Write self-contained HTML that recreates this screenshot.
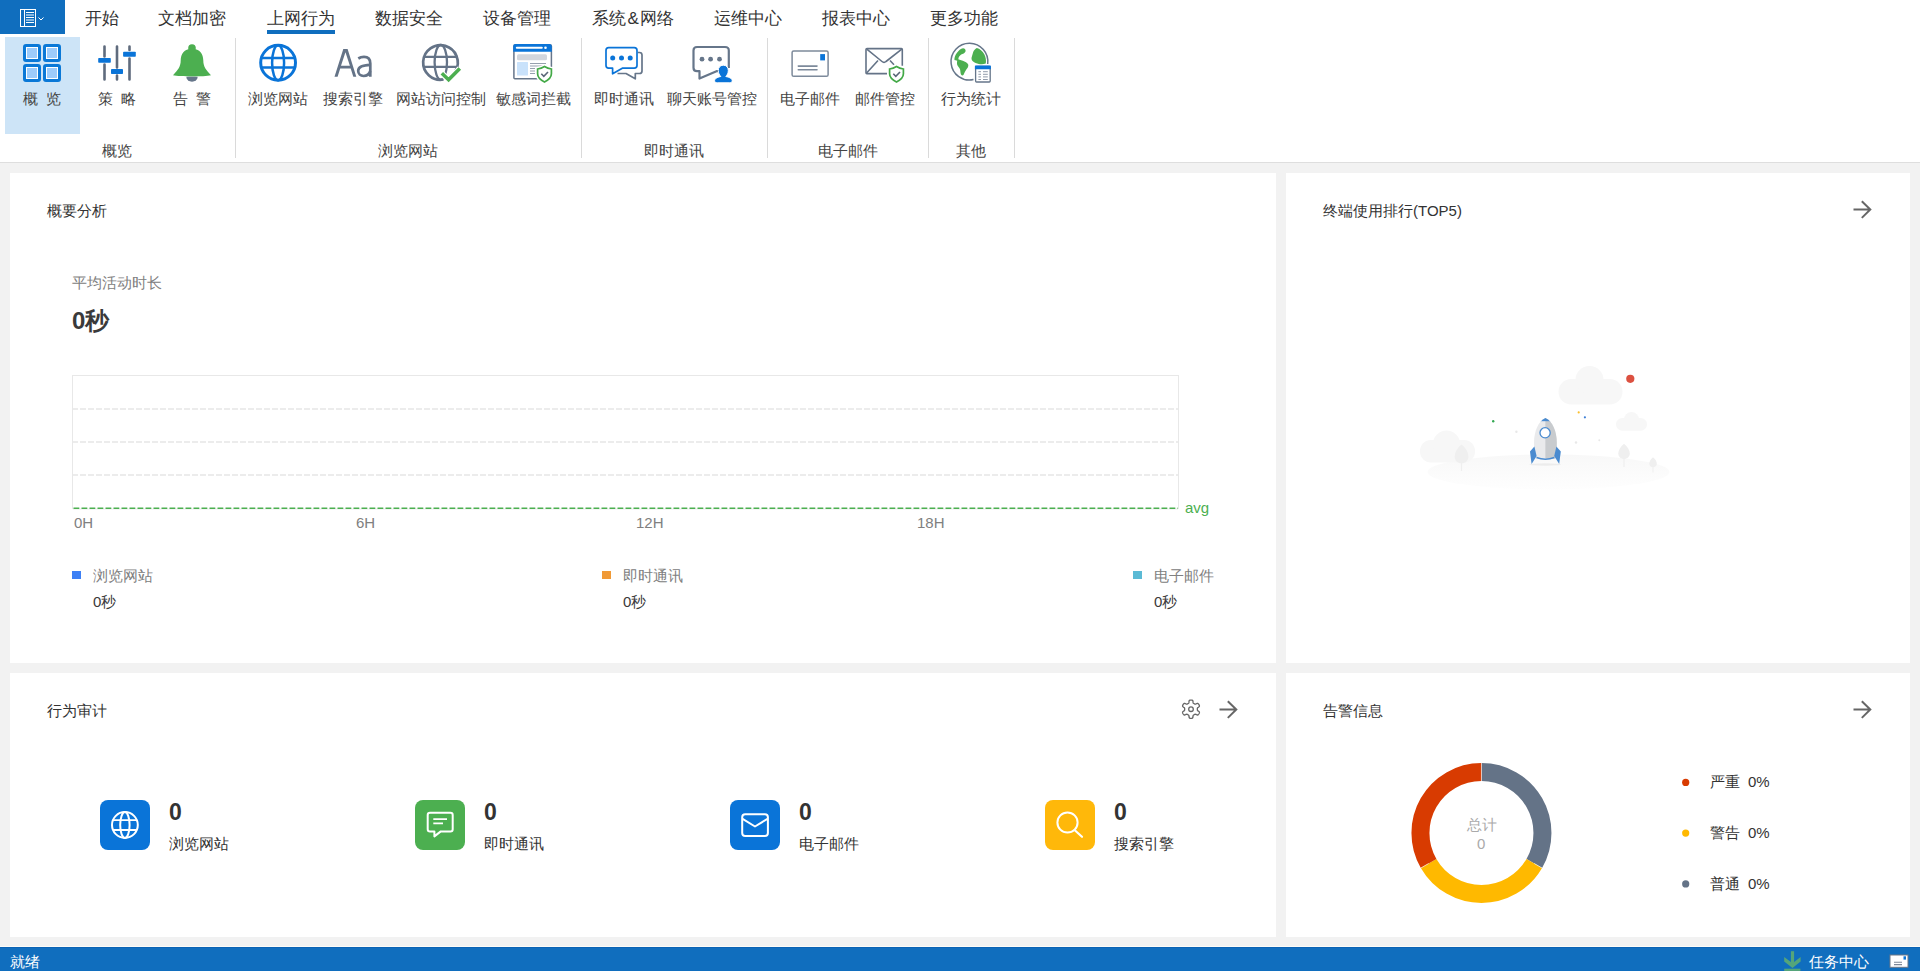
<!DOCTYPE html>
<html><head><meta charset="utf-8">
<style>
*{margin:0;padding:0;box-sizing:border-box}
html,body{width:1920px;height:971px;overflow:hidden;background:#fff}
body{font-family:"Liberation Sans",sans-serif;color:#333;position:relative}
.a{position:absolute;white-space:nowrap}
.t17{font-size:17px;line-height:20px;color:#333}
.t15{font-size:15px;line-height:20px}
.tab{top:9px}
.rb{top:88.5px;color:#444;text-align:center;width:120px}
.gl{top:141px;color:#444;text-align:center;width:120px}
.sep{position:absolute;top:38px;width:1px;height:120px;background:#dadada}
.panel{position:absolute;background:#fff}
svg{position:absolute;overflow:visible}
</style></head><body>
<!-- tab bar -->
<div class="a" style="left:0;top:0;width:65px;height:34px;background:#106ebe"></div>
<svg style="left:0;top:0" width="65" height="34">
  <rect x="20.5" y="9.5" width="15" height="17" fill="none" stroke="#fff" stroke-width="1"/>
  <line x1="24.5" y1="9.5" x2="24.5" y2="26.5" stroke="#fff" stroke-width="1"/>
  <path d="M26 12.5h8M26 15h8M26 17.5h8M26 20h8M26 22.5h8" stroke="#fff" stroke-width="1"/>
  <path d="M38.5 17.5l2.5 2.5 2.5-2.5" fill="none" stroke="#fff" stroke-width="1"/>
</svg>
<div class="a t17 tab" style="left:85px">开始</div>
<div class="a t17 tab" style="left:158px">文档加密</div>
<div class="a t17 tab" style="left:267px">上网行为</div>
<div class="a t17 tab" style="left:375px">数据安全</div>
<div class="a t17 tab" style="left:483px">设备管理</div>
<div class="a t17 tab" style="left:592px">系统<span style="margin:0 1.5px">&amp;</span>网络</div>
<div class="a t17 tab" style="left:714px">运维中心</div>
<div class="a t17 tab" style="left:822px">报表中心</div>
<div class="a t17 tab" style="left:930px">更多功能</div>
<div class="a" style="left:267px;top:30px;width:68px;height:3.6px;background:#106ebe"></div>

<!-- ribbon -->
<div class="a" style="left:5px;top:37px;width:75px;height:97px;background:#cde4f7"></div>
<div class="a" style="left:0;top:162px;width:1920px;height:1px;background:#dedede"></div>
<div class="a" style="left:0;top:163px;width:1920px;height:784px;background:#f2f2f2"></div>

<div class="sep" style="left:235px"></div>
<div class="sep" style="left:581px"></div>
<div class="sep" style="left:767px"></div>
<div class="sep" style="left:928px"></div>
<div class="sep" style="left:1014px"></div>

<div class="a t15 rb" style="left:-18px;word-spacing:4px">概 览</div>
<div class="a t15 rb" style="left:57px;word-spacing:4px">策 略</div>
<div class="a t15 rb" style="left:132px;word-spacing:4px">告 警</div>
<div class="a t15 rb" style="left:218px">浏览网站</div>
<div class="a t15 rb" style="left:293px">搜索引擎</div>
<div class="a t15 rb" style="left:381px">网站访问控制</div>
<div class="a t15 rb" style="left:473px">敏感词拦截</div>
<div class="a t15 rb" style="left:564px">即时通讯</div>
<div class="a t15 rb" style="left:652px">聊天账号管控</div>
<div class="a t15 rb" style="left:750px">电子邮件</div>
<div class="a t15 rb" style="left:825px">邮件管控</div>
<div class="a t15 rb" style="left:911px">行为统计</div>

<div class="a t15 gl" style="left:57px">概览</div>
<div class="a t15 gl" style="left:348px">浏览网站</div>
<div class="a t15 gl" style="left:614px">即时通讯</div>
<div class="a t15 gl" style="left:788px">电子邮件</div>
<div class="a t15 gl" style="left:911px">其他</div>

<svg style="left:0;top:0" width="1100" height="170" viewBox="0 0 1100 170">
<!-- overview -->
<g>
 <rect x="24.5" y="45.5" width="15" height="15" rx="1.5" fill="#fff" stroke="#0a78d7" stroke-width="3"/>
 <rect x="44.5" y="45.5" width="15" height="15" rx="1.5" fill="#fff" stroke="#0a78d7" stroke-width="3"/>
 <rect x="24.5" y="65.5" width="15" height="15" rx="1.5" fill="#fff" stroke="#0a78d7" stroke-width="3"/>
 <rect x="44.5" y="65.5" width="15" height="15" rx="1.5" fill="#fff" stroke="#0a78d7" stroke-width="3"/>
 <rect x="27" y="48" width="10" height="10" fill="#9ccbfb"/>
 <rect x="47" y="48" width="10" height="10" fill="#9ccbfb"/>
 <rect x="27" y="68" width="10" height="10" fill="#9ccbfb"/>
 <rect x="47" y="68" width="10" height="10" fill="#9ccbfb"/>
</g>
<!-- policy -->
<g stroke="#5f6b7d" stroke-width="2.6" stroke-linecap="round">
 <path d="M104.5 46.5V56.5M104.5 64.5V79.5"/>
 <path d="M117 46.5V67.5M117 75.5V79.5"/>
 <path d="M129.5 46.5V50M129.5 58.5V79.5"/>
</g>
<g fill="#0a74d8">
 <rect x="98.2" y="58" width="12.6" height="4.8" rx="0.8"/>
 <rect x="111" y="69.1" width="12" height="4.9" rx="0.8"/>
 <rect x="123.1" y="51.8" width="12.7" height="4.9" rx="0.8"/>
</g>
<!-- bell -->
<g>
 <circle cx="192" cy="48" r="3.8" fill="#4caf50"/>
 <path d="M192 48.8C184 48.8 180.7 54.5 180.7 60.5C180.7 66.5 178 70 173 75.2C180 76.8 204 76.8 211 75.2C206 70 203.3 66.5 203.3 60.5C203.3 54.5 200 48.8 192 48.8Z" fill="#4caf50"/>
 <path d="M186.3 76.8A5.7 5 0 0 0 197.7 76.8Z" fill="#66768a"/>
</g>
<!-- globe blue -->
<g fill="none" stroke="#0a74d8">
 <circle cx="278.1" cy="62.75" r="17.4" stroke-width="3"/>
 <ellipse cx="278.1" cy="62.75" rx="6" ry="17.4" stroke-width="2.5"/>
 <path d="M261.5 58H294.7M261.5 67.6H294.7" stroke-width="2.5"/>
</g>
<!-- Aa -->
<g fill="none" stroke="#647387" stroke-width="2.7">
 <path d="M334.5 76.8L343.3 49H347.6L356.3 76.8H353.3L350.7 68.5H340.2L337.6 76.8ZM341 65.8H349.9L345.45 52.2Z" fill="#647387" stroke="none" fill-rule="evenodd"/>
 <path d="M358.3 58.5C360 57.4 362 56.9 364 56.9C368.5 56.9 370.3 59.3 370.3 63.5V76.8"/>
 <path d="M370.3 64.8C364.5 65 358.2 65.8 358.2 70.8C358.2 74 360.6 76 363.5 76C367 76 369.5 73.5 370.3 71"/>
</g>
<!-- globe check -->
<g fill="none" stroke="#647387">
 <path d="M455.5 71A17.3 17.3 0 1 0 443.5 79.5" stroke-width="2.7"/>
 <ellipse cx="440.8" cy="62.3" rx="6.2" ry="17.3" stroke-width="2.3"/>
 <path d="M424 56.8H457.5M424 66.8H456" stroke-width="2.3"/>
</g>
<path d="M441.8 73.3L448.6 79.8L459.8 68.5" fill="none" stroke="#fff" stroke-width="6"/>
<path d="M441.8 73.3L448.6 79.8L459.8 68.5" fill="none" stroke="#4caf50" stroke-width="3.6"/>
<!-- sensitive words -->
<g>
 <rect x="513.9" y="44.9" width="37.5" height="33.8" rx="1" fill="#fff" stroke="#66768a" stroke-width="1.5"/>
 <path d="M513.2 46.5Q513.2 44.1 515.5 44.1H549.5Q551.8 44.1 551.8 46.5V51.8H513.2Z" fill="#0a74d8"/>
 <rect x="515.8" y="46.7" width="27" height="2" rx="1" fill="#fff"/>
 <circle cx="545.5" cy="47.8" r="1.3" fill="#fff"/>
 <rect x="517" y="54.3" width="30" height="6" rx="1.5" fill="#d2d6dd"/>
 <rect x="517" y="62" width="11" height="13.5" rx="0.5" fill="#c9e2fb"/>
 <path d="M530 63.5H546M530 66H543M530 68.5H535M530 71H535M530 73.5H535" stroke="#8a95a5" stroke-width="0.9"/>
 <path d="M544.5 65.5C541.5 67.5 539 67.8 536.5 68.2V73.5C536.5 78 540 81 544.5 83C549 81 552.5 78 552.5 73.5V68.2C550 67.8 547.5 67.5 544.5 65.5Z" fill="#fff" stroke="#fff" stroke-width="2.5"/>
 <path d="M544.5 66.5C542 68 539.5 68.7 537.6 69V73.8C537.6 77.5 540.5 80 544.5 82C548.5 80 551.4 77.5 551.4 73.8V69C549.5 68.7 547 68 544.5 66.5Z" fill="#fff" stroke="#43a947" stroke-width="1.7"/>
 <path d="M541.3 73.8L543.8 76.3L548 72" fill="none" stroke="#5a6678" stroke-width="1.6"/>
</g>
<!-- IM -->
<g fill="none" stroke-linejoin="round">
 <path d="M637.6 52.5H639.5Q642 52.5 642 55V71Q642 73.5 639.5 73.5H635.3V78.8L626 73.5H617.5" stroke="#66768a" stroke-width="1.7"/>
 <path d="M608.6 47.7H634.3Q637 47.7 637 50.4V65.6Q637 68.2 634.3 68.2H622.3L612.6 73.8V68.2H608.6Q606 68.2 606 65.6V50.4Q606 47.7 608.6 47.7Z" fill="#fff" stroke="#0a74d8" stroke-width="1.7"/>
</g>
<g fill="#0a74d8"><circle cx="612.7" cy="57.9" r="2.5"/><circle cx="621.5" cy="57.9" r="2.5"/><circle cx="630.2" cy="57.9" r="2.5"/></g>
<!-- chat account -->
<g fill="none" stroke="#66768a" stroke-width="2.2" stroke-linejoin="round">
 <path d="M723 71.2H716.5L699.5 78.5V71.2H697Q693.5 71.2 693.5 67.7V50.5Q693.5 47 697 47H725Q728.8 47 728.8 50.5V68"/>
</g>
<g fill="#66768a"><circle cx="702" cy="59.2" r="2.4"/><circle cx="710.6" cy="59.2" r="2.4"/><circle cx="719.5" cy="59.2" r="2.4"/></g>
<path d="M723.3 65.2C719.8 65.2 718.3 67.8 718.3 70.5C718.3 73 719.3 75 720.8 76.5C717 77.3 714.6 78.8 714.6 80.6C714.6 82.2 715.8 82.8 717.5 82.8H729.3C731 82.8 732.2 82.2 732.2 80.6C732.2 78.8 729.8 77.3 725.8 76.5C727.3 75 728.3 73 728.3 70.5C728.3 67.8 726.8 65.2 723.3 65.2Z" fill="#0a74d8" stroke="#fff" stroke-width="1"/>
<!-- email -->
<g>
 <rect x="792.1" y="50.9" width="36" height="25.4" rx="1.6" fill="none" stroke="#7d8a9b" stroke-width="1.5"/>
 <rect x="820.2" y="54.1" width="4.8" height="6.3" fill="#0a74d8"/>
 <path d="M798.3 66.1H817M798.3 69.8H817" stroke="#7d8a9b" stroke-width="1.6" stroke-linecap="round"/>
</g>
<!-- mail control -->
<g fill="none" stroke="#647387" stroke-width="1.6" stroke-linejoin="round">
 <path d="M887 73.6H866.8Q866 73.6 866 72.8V49.6Q866 48.6 867 48.6H901.5Q902.3 48.6 902.3 49.6V65.8"/>
 <path d="M866.8 49.2L882 61.5Q884 63.2 886 61.5L901.8 49.2"/>
 <path d="M866.6 73L878 60.5M890 60.5L894 64.7"/>
</g>
<path d="M896.5 65.5C893.5 67.5 891 67.8 888.5 68.2V73.5C888.5 78 892 81 896.5 83C901 81 904.5 78 904.5 73.5V68.2C902 67.8 899.5 67.5 896.5 65.5Z" fill="#fff" stroke="#fff" stroke-width="2.5"/>
<path d="M896.5 66.5C894 68 891.5 68.7 889.6 69V73.8C889.6 77.5 892.5 80 896.5 82C900.5 80 903.4 77.5 903.4 73.8V69C901.5 68.7 899 68 896.5 66.5Z" fill="#fff" stroke="#43a947" stroke-width="1.7"/>
<path d="M893.3 73.8L895.8 76.3L900 72" fill="none" stroke="#5a6678" stroke-width="1.6"/>
<!-- stats -->
<g>
 <path d="M987.7 64A18.4 18.4 0 1 0 973.5 79.6" fill="none" stroke="#66768a" stroke-width="1.5"/>
 <path d="M963 48.3C964.8 48.3 966 49.8 965.5 51.5C965 53 962.8 54 961.2 54.6C959.5 55.6 958.5 57.5 958.3 59.3C959.5 59.8 961 60.2 962.8 60.8C965 61.6 967.3 62.7 968.3 64.7C968.6 66.5 967.3 68.3 966.3 69.6C965.3 71.3 964.3 73 963.6 74.8C963 75.8 961.6 75.6 961 74.6C960.3 72.8 960.5 70.8 960 69.2C959.3 67.6 957.8 66.6 957.3 65C956.8 63.6 957 62.2 957.2 60.8C956.2 60.5 955 60.6 954.4 59.8C954.3 57.3 955.5 54.8 957 52.8C958.6 50.5 960.7 48.8 963 48.3Z" fill="#4caf50"/>
 <path d="M976.8 47.9C979.8 48.6 982.5 51 984.3 54.3C985.8 57.2 986.3 60.3 985.8 63.5C983.6 64.3 981 64.3 978.8 63.9C976.6 63.4 974.5 62.6 972.8 61.2C971.4 60 971.2 58 971.9 56.4C972.5 55 972.6 53.5 973.2 52C973.9 50.2 975.2 48.6 976.8 47.9Z" fill="#4caf50"/>
 <rect x="975.6" y="66.3" width="14.6" height="15.7" rx="0.9" fill="#fff" stroke="#66768a" stroke-width="1.3"/>
 <rect x="974.9" y="65.6" width="16" height="3.6" rx="0.5" fill="#0a74d8"/>
 <path d="M978.4 71.7H981M983 71.7H987.8M978.4 74.3H981M983 74.3H987.8M978.4 76.9H981M983 76.9H987.8M978.4 79.5H981M983 79.5H987.8" stroke="#8590a0" stroke-width="0.9"/>
</g>
</svg>


<!-- panels -->
<div class="panel" style="left:10px;top:173px;width:1266px;height:490px"></div>
<div class="panel" style="left:1286px;top:173px;width:624px;height:490px"></div>
<div class="panel" style="left:10px;top:673px;width:1266px;height:264px"></div>
<div class="panel" style="left:1286px;top:673px;width:624px;height:264px"></div>

<div class="a t15" style="left:47px;top:201px;color:#333">概要分析</div>
<div class="a t15" style="left:72px;top:273px;color:#808080">平均活动时长</div>
<div class="a" style="left:72px;top:306px;font-size:24px;line-height:30px;font-weight:bold;color:#3a3a3a">0秒</div>
<div class="a" style="left:72px;top:375px;width:1107px;height:134px;border:1px solid #e8e8e8;border-bottom:none"></div>
<svg style="left:0;top:0" width="1280" height="540">
 <path d="M73 409H1178M73 442H1178M73 475H1178" stroke="#ececec" stroke-width="2" stroke-dasharray="6 2" stroke-dashoffset="1"/>
 <path d="M73 509H1178" stroke="#ececec" stroke-width="1"/>
 <path d="M73.5 508.2H1178" stroke="#4caf50" stroke-width="1.4" stroke-dasharray="5.8 2.2"/>
</svg>
<div class="a t15" style="left:1185px;top:498px;color:#4caf50">avg</div>
<div class="a t15" style="left:74px;top:513px;color:#808080">0H</div>
<div class="a t15" style="left:356px;top:513px;color:#808080">6H</div>
<div class="a t15" style="left:636px;top:513px;color:#808080">12H</div>
<div class="a t15" style="left:917px;top:513px;color:#808080">18H</div>
<div class="a" style="left:72px;top:571px;width:9px;height:8px;background:#3d80f5"></div>
<div class="a" style="left:602px;top:571px;width:9px;height:8px;background:#f09a37"></div>
<div class="a" style="left:1133px;top:571px;width:9px;height:8px;background:#5bbad5"></div>
<div class="a t15" style="left:93px;top:566px;color:#808080">浏览网站</div>
<div class="a t15" style="left:623px;top:566px;color:#808080">即时通讯</div>
<div class="a t15" style="left:1154px;top:566px;color:#808080">电子邮件</div>
<div class="a t15" style="left:93px;top:592px;color:#3a3a3a">0秒</div>
<div class="a t15" style="left:623px;top:592px;color:#3a3a3a">0秒</div>
<div class="a t15" style="left:1154px;top:592px;color:#3a3a3a">0秒</div>

<!-- panel2 -->
<div class="a t15" style="left:1323px;top:201px;color:#333">终端使用排行(TOP5)</div>
<svg style="left:0;top:0" width="1920" height="971">
 <defs><path id="arr" d="M1219.5 709.5H1236M1227.8 701.3L1236.3 709.5L1227.8 717.9" fill="none" stroke="#666" stroke-width="2" stroke-linecap="butt"/></defs>
 <use href="#arr" transform="translate(634 -500)"/>
 <use href="#arr"/>
 <use href="#arr" transform="translate(634 0)"/>
 <path d="M1191.00 700.05L1191.24 700.05L1191.48 700.07L1191.72 700.09L1191.95 700.13L1192.19 700.19L1192.41 700.28L1192.62 700.45L1192.80 700.72L1192.93 701.15L1193.01 701.71L1193.05 702.28L1193.11 702.70L1193.20 702.98L1193.32 703.16L1193.45 703.28L1193.59 703.37L1193.74 703.46L1193.89 703.54L1194.03 703.62L1194.17 703.70L1194.32 703.78L1194.46 703.87L1194.60 703.96L1194.75 704.04L1194.90 704.11L1195.07 704.17L1195.28 704.18L1195.57 704.12L1195.97 703.96L1196.48 703.72L1197.00 703.50L1197.44 703.40L1197.77 703.42L1198.01 703.52L1198.21 703.67L1198.38 703.84L1198.53 704.03L1198.67 704.22L1198.80 704.42L1198.92 704.62L1199.04 704.83L1199.15 705.05L1199.25 705.27L1199.33 705.49L1199.40 705.72L1199.43 705.97L1199.39 706.23L1199.25 706.52L1198.94 706.85L1198.49 707.19L1198.02 707.51L1197.68 707.78L1197.49 708.00L1197.39 708.19L1197.36 708.36L1197.34 708.53L1197.34 708.70L1197.35 708.87L1197.35 709.03L1197.35 709.20L1197.35 709.37L1197.35 709.53L1197.34 709.70L1197.34 709.87L1197.36 710.04L1197.39 710.21L1197.49 710.40L1197.68 710.62L1198.02 710.89L1198.49 711.21L1198.94 711.55L1199.25 711.88L1199.39 712.17L1199.43 712.43L1199.40 712.68L1199.33 712.91L1199.25 713.13L1199.15 713.35L1199.04 713.57L1198.92 713.78L1198.80 713.98L1198.67 714.18L1198.53 714.37L1198.38 714.56L1198.21 714.73L1198.01 714.88L1197.77 714.98L1197.44 715.00L1197.00 714.90L1196.48 714.68L1195.97 714.44L1195.57 714.28L1195.28 714.22L1195.07 714.23L1194.90 714.29L1194.75 714.36L1194.60 714.44L1194.46 714.53L1194.32 714.62L1194.17 714.70L1194.03 714.78L1193.89 714.86L1193.74 714.94L1193.59 715.03L1193.45 715.12L1193.32 715.24L1193.20 715.42L1193.11 715.70L1193.05 716.12L1193.01 716.69L1192.93 717.25L1192.80 717.68L1192.62 717.95L1192.41 718.12L1192.19 718.21L1191.95 718.27L1191.72 718.31L1191.48 718.33L1191.24 718.35L1191.00 718.35L1190.76 718.35L1190.52 718.33L1190.28 718.31L1190.05 718.27L1189.81 718.21L1189.59 718.12L1189.38 717.95L1189.20 717.68L1189.07 717.25L1188.99 716.69L1188.95 716.12L1188.89 715.70L1188.80 715.42L1188.68 715.24L1188.55 715.12L1188.41 715.03L1188.26 714.94L1188.11 714.86L1187.97 714.78L1187.83 714.70L1187.68 714.62L1187.54 714.53L1187.40 714.44L1187.25 714.36L1187.10 714.29L1186.93 714.23L1186.72 714.22L1186.43 714.28L1186.03 714.44L1185.52 714.68L1185.00 714.90L1184.56 715.00L1184.23 714.98L1183.99 714.88L1183.79 714.73L1183.62 714.56L1183.47 714.37L1183.33 714.18L1183.20 713.98L1183.08 713.78L1182.96 713.57L1182.85 713.35L1182.75 713.13L1182.67 712.91L1182.60 712.68L1182.57 712.43L1182.61 712.17L1182.75 711.88L1183.06 711.55L1183.51 711.21L1183.98 710.89L1184.32 710.62L1184.51 710.40L1184.61 710.21L1184.64 710.04L1184.66 709.87L1184.66 709.70L1184.65 709.53L1184.65 709.37L1184.65 709.20L1184.65 709.03L1184.65 708.87L1184.66 708.70L1184.66 708.53L1184.64 708.36L1184.61 708.19L1184.51 708.00L1184.32 707.78L1183.98 707.51L1183.51 707.19L1183.06 706.85L1182.75 706.52L1182.61 706.23L1182.57 705.97L1182.60 705.72L1182.67 705.49L1182.75 705.27L1182.85 705.05L1182.96 704.83L1183.08 704.62L1183.20 704.42L1183.33 704.22L1183.47 704.03L1183.62 703.84L1183.79 703.67L1183.99 703.52L1184.23 703.42L1184.56 703.40L1185.00 703.50L1185.52 703.72L1186.03 703.96L1186.43 704.12L1186.72 704.18L1186.93 704.17L1187.10 704.11L1187.25 704.04L1187.40 703.96L1187.54 703.87L1187.68 703.78L1187.83 703.70L1187.97 703.62L1188.11 703.54L1188.26 703.46L1188.41 703.37L1188.55 703.28L1188.68 703.16L1188.80 702.98L1188.89 702.70L1188.95 702.28L1188.99 701.71L1189.07 701.15L1189.20 700.72L1189.38 700.45L1189.59 700.28L1189.81 700.19L1190.05 700.13L1190.28 700.09L1190.52 700.07L1190.76 700.05Z" fill="none" stroke="#666" stroke-width="1.3" stroke-linejoin="round"/>
 <circle cx="1191" cy="709.2" r="2.3" fill="none" stroke="#666" stroke-width="1.3"/>
 <!-- rocket illustration -->
 <g>
  <defs><linearGradient id="gnd" x1="0" y1="0" x2="0" y2="1"><stop offset="0" stop-color="#f8f8f8"/><stop offset="1" stop-color="#fefefe"/></linearGradient><clipPath id="rk"><path d="M1545.4 418C1538.5 421 1534 431 1534 443C1534 449 1534.5 454 1535.5 458.5H1555.3C1556.3 454 1556.8 449 1556.8 443C1556.8 431 1552.3 421 1545.4 418Z"/></clipPath></defs><ellipse cx="1548.5" cy="472" rx="121" ry="17.5" fill="url(#gnd)"/>
  <rect x="1420" y="440" width="55" height="22.5" rx="11" fill="#f7f7f7"/>
  <circle cx="1446.5" cy="444" r="13.5" fill="#f7f7f7"/>
  <circle cx="1462" cy="449" r="9" fill="#f7f7f7"/>
  <rect x="1558.5" y="379" width="64" height="25.5" rx="12.7" fill="#f7f7f7"/>
  <circle cx="1589.5" cy="380" r="14" fill="#f7f7f7"/>
  <rect x="1616" y="418" width="31" height="12.7" rx="6.3" fill="#f7f7f7"/>
  <circle cx="1631.5" cy="419.5" r="7.5" fill="#f7f7f7"/>
  <path d="M1461.5 444.5C1457 448 1454.7 452.5 1454.7 456.5C1454.7 460.5 1457.5 463.3 1461.5 463.3C1465.5 463.3 1468.4 460.5 1468.4 456.5C1468.4 452.5 1466 448 1461.5 444.5Z" fill="#efefef"/>
  <path d="M1461.5 462V471" stroke="#efefef" stroke-width="1.2"/>
  <path d="M1624 443.7C1620.5 446.5 1618.3 450 1618.3 453.5C1618.3 456.5 1620.8 459 1624 459C1627.3 459 1629.8 456.5 1629.8 453.5C1629.8 450 1627.5 446.5 1624 443.7Z" fill="#efefef"/>
  <path d="M1624 458V467" stroke="#efefef" stroke-width="1.2"/>
  <path d="M1653 457.3C1650.8 459 1649.3 461.5 1649.3 463.8C1649.3 465.8 1651 467.3 1653 467.3C1655 467.3 1656.8 465.8 1656.8 463.8C1656.8 461.5 1655.3 459 1653 457.3Z" fill="#efefef"/>
  <path d="M1653 466.5V472.5" stroke="#efefef" stroke-width="1"/>
  <ellipse cx="1545.2" cy="464.5" rx="16" ry="1.2" fill="#ececec"/>
  <path d="M1545.4 418C1538.5 421 1534 431 1534 443C1534 449 1534.5 454 1535.5 458.5H1555.3C1556.3 454 1556.8 449 1556.8 443C1556.8 431 1552.3 421 1545.4 418Z" fill="#e9eaec"/>
  <path d="M1545.4 418C1552.3 421 1556.8 431 1556.8 443C1556.8 449 1556.3 454 1555.3 458.5H1545.4Z" fill="#c8cbce"/>
  <rect x="1530" y="416" width="30" height="5.2" fill="#4a8bd0" clip-path="url(#rk)"/>
  <path d="M1536.5 457.5Q1545.4 461 1554.3 457.5" fill="none" stroke="#4a8bd0" stroke-width="1.6"/>
  <path d="M1534.4 446.5L1530 451.5L1531.6 464L1536.6 456Z" fill="#4a8bd0"/>
  <path d="M1556.4 446.5L1560.8 451.5L1559.2 464L1554.2 456Z" fill="#4a8bd0"/>
  <circle cx="1545.1" cy="432.8" r="5.1" fill="#fff" stroke="#4a8bd0" stroke-width="1.3"/>
  <circle cx="1630.3" cy="378.8" r="4.1" fill="#dc5040"/>
  <circle cx="1493.2" cy="421.3" r="1.2" fill="#34a853"/>
  <circle cx="1578.7" cy="412.4" r="1.1" fill="#fbc02d"/>
  <circle cx="1584.9" cy="417.3" r="1.1" fill="#3d7fd6"/>
  <circle cx="1516.4" cy="431.7" r="1.2" fill="#e8e8e8"/>
  <circle cx="1576" cy="442.5" r="1.2" fill="#e8e8e8"/>
  <circle cx="1599.3" cy="440.3" r="1" fill="#e8e8e8"/>
 </g>
 <!-- panel3 icons -->
 <rect x="100" y="800" width="50" height="50" rx="8" fill="#0a74d8"/>
 <rect x="415" y="800" width="50" height="50" rx="8" fill="#4caf50"/>
 <rect x="730" y="800" width="50" height="50" rx="8" fill="#0a74d8"/>
 <rect x="1045" y="800" width="50" height="50" rx="8" fill="#ffb80a"/>
 <g fill="none" stroke="#fff" stroke-width="2">
  <circle cx="124.9" cy="825" r="12.9"/>
  <ellipse cx="124.9" cy="825" rx="4.7" ry="12.9"/>
  <path d="M113 820.2H136.8M113 830H136.8" stroke-width="1.8"/>
  <path d="M430 812.7H450.5Q452.7 812.7 452.7 815V829.2Q452.7 831.4 450.5 831.4H440.8L434.4 836.4V831.4H430Q427.7 831.4 427.7 829.2V815Q427.7 812.7 430 812.7Z" stroke-linejoin="round"/>
  <path d="M433.3 819.1H447M433.3 823.4H443" stroke-width="1.6"/>
  <rect x="742.2" y="814.2" width="25.7" height="21.8" rx="3"/>
  <path d="M742.6 818.8L755 826.5L767.5 818.8" stroke-linejoin="round"/>
  <circle cx="1067.5" cy="822.5" r="10.1"/>
  <path d="M1074.8 830.2L1082 836.8" stroke-linecap="round" stroke-width="2.2"/>
 </g>
 <!-- donut -->
 <g fill="none" stroke-width="18">
  <path d="M1481.45 772A61 61 0 0 1 1534.28 863.5" stroke="#647387"/>
  <path d="M1534.28 863.5A61 61 0 0 1 1428.62 863.5" stroke="#ffb900"/>
  <path d="M1428.62 863.5A61 61 0 0 1 1481.45 772" stroke="#d83b01"/>
 </g>
 <path d="M1481.45 762V782M1534.28 863.5L1551.6 873.5M1428.62 863.5L1411.3 873.5" stroke="#fff" stroke-width="0.6"/>
 <circle cx="1685.7" cy="782.4" r="3.6" fill="#d83b01"/>
 <circle cx="1685.7" cy="833.1" r="3.6" fill="#ffb900"/>
 <circle cx="1685.7" cy="883.9" r="3.6" fill="#647387"/>
</svg>
<!-- panel3 text -->
<div class="a t15" style="left:47px;top:701px;color:#333">行为审计</div>
<div class="a" style="left:169px;top:799px;font-size:23px;line-height:26px;font-weight:bold;color:#333">0</div>
<div class="a" style="left:484px;top:799px;font-size:23px;line-height:26px;font-weight:bold;color:#333">0</div>
<div class="a" style="left:799px;top:799px;font-size:23px;line-height:26px;font-weight:bold;color:#333">0</div>
<div class="a" style="left:1114px;top:799px;font-size:23px;line-height:26px;font-weight:bold;color:#333">0</div>
<div class="a t15" style="left:169px;top:834px;color:#333">浏览网站</div>
<div class="a t15" style="left:484px;top:834px;color:#333">即时通讯</div>
<div class="a t15" style="left:799px;top:834px;color:#333">电子邮件</div>
<div class="a t15" style="left:1114px;top:834px;color:#333">搜索引擎</div>
<!-- panel4 text -->
<div class="a t15" style="left:1323px;top:701px;color:#333">告警信息</div>
<div class="a t15" style="left:1467px;top:814.5px;color:#aaa">总计</div>
<div class="a t15" style="left:1477px;top:834px;color:#aaa">0</div>
<div class="a t15" style="left:1710px;top:772px;color:#333">严重</div>
<div class="a t15" style="left:1710px;top:823px;color:#333">警告</div>
<div class="a t15" style="left:1710px;top:874px;color:#333">普通</div>
<div class="a t15" style="left:1748px;top:772px;color:#333">0%</div>
<div class="a t15" style="left:1748px;top:823px;color:#333">0%</div>
<div class="a t15" style="left:1748px;top:874px;color:#333">0%</div>




<!-- status bar -->
<div class="a" style="left:0;top:946px;width:1920px;height:1px;background:#fdfcf8"></div>
<div class="a" style="left:0;top:947px;width:1920px;height:24px;background:#106ebe;border-top:1px solid #0b63b5"></div>
<svg style="left:0;top:0" width="1920" height="971">
 <rect x="1790.9" y="951.2" width="3.2" height="14" fill="#55a57a"/>
 <path d="M1784.2 957L1792.5 963.3L1800.6 957V961.5L1792.5 968L1784.2 961.5Z" fill="#55a57a"/>
 <rect x="1784.2" y="968.7" width="16.2" height="2.3" fill="#55a57a"/>
 <rect x="1890" y="955" width="18" height="12.3" fill="#fff" stroke="#6b7686" stroke-width="1"/>
 <rect x="1903.5" y="956.3" width="2.5" height="3.3" fill="#0a74d8"/>
 <path d="M1894 962.3H1902M1894 964.6H1902" stroke="#7d8797" stroke-width="1.1"/>
</svg>
<div class="a t15" style="left:10px;top:952px;color:#fff">就绪</div>
<div class="a t15" style="left:1809px;top:952px;color:#fff">任务中心</div>
</body></html>
